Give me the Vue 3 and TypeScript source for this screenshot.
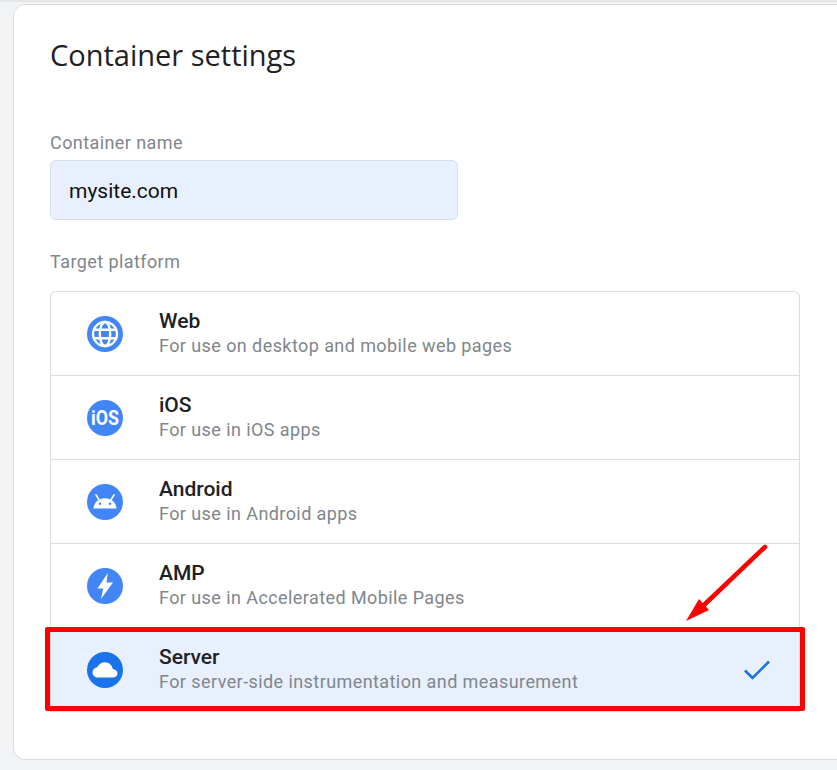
<script setup lang="ts">
interface Platform {
  name: string;
  desc: string;
  icon: string;
  selected?: boolean;
}
const platforms: Platform[] = [
  { name: "Web", desc: "For use on desktop and mobile web pages", icon: "web" },
  { name: "iOS", desc: "For use in iOS apps", icon: "ios" },
  { name: "Android", desc: "For use in Android apps", icon: "android" },
  { name: "AMP", desc: "For use in Accelerated Mobile Pages", icon: "amp" },
  { name: "Server", desc: "For server-side instrumentation and measurement", icon: "server", selected: true },
];
</script>

<template>
  <div class="page">
    <section class="card">
      <h1 class="title">Container settings</h1>
      <label class="label name-label">Container name</label>
      <div class="input">mysite.com</div>
      <label class="label target-label">Target platform</label>
      <div class="list">
        <div v-for="p in platforms" :key="p.name" class="row" :class="{ selected: p.selected }">
          <svg class="icon" viewBox="0 0 36 36" width="36" height="36">
            <circle cx="18" cy="18" r="18" :fill="p.selected ? '#1a73e8' : '#4285f4'" />
            <g v-if="p.icon === 'web'" fill="none" stroke="#fff" stroke-width="2.400">
              <circle cx="18" cy="18" r="12" />
              <ellipse cx="18" cy="18" rx="5.200" ry="12" />
              <path d="M7 13.800h22M7 22.200h22" />
            </g>
            <text v-else-if="p.icon === 'ios'" x="18" y="25" text-anchor="middle" textLength="28" lengthAdjust="spacingAndGlyphs" class="ios-text">iOS</text>
            <g v-else-if="p.icon === 'android'" fill="#fff">
              <path d="M6.500 24.500c.3-5.900 5-10.300 11.500-10.300s11.200 4.400 11.500 10.300z" />
              <path d="M11.800 15.500 9 10.800M24.200 15.500 27 10.800" stroke="#fff" stroke-width="1.600" stroke-linecap="round" />
              <circle cx="13" cy="19.700" r="1.200" fill="#4285f4" />
              <circle cx="23" cy="19.700" r="1.200" fill="#4285f4" />
            </g>
            <path v-else-if="p.icon === 'amp'" fill="#fff" d="M20.800 5 10.500 20.500h5.700L14 31 26 14.500h-6.500z" />
            <path v-else fill="#fff" d="M11 25.500c-3.200 0-5.500-2.300-5.500-5.100 0-2.700 2.100-4.800 4.800-5.100 1.200-3 4.100-5 7.500-5 4.100 0 7.400 2.900 8 6.800 2.600.2 4.700 2.100 4.700 4.300 0 2.300-2.100 4.100-4.700 4.100z" />
          </svg>
          <div class="text">
            <div class="name">{{ p.name }}</div>
            <div class="desc">{{ p.desc }}</div>
          </div>
          <svg v-if="p.selected" class="check" viewBox="0 0 28 22" width="28" height="22">
            <path d="M2 11.500 9.500 19 26 2.500" fill="none" stroke="#1a73e8" stroke-width="2.600" />
          </svg>
        </div>
        <div class="highlight"></div>
      </div>
    </section>
    <svg class="arrow" viewBox="0 0 90 100" width="90" height="100">
      <path d="M80 4 19 62" stroke="#f00" stroke-width="4.600" stroke-linecap="round" fill="none" />
      <path d="M1 78 14 56 24 67z" fill="#f00" />
    </svg>
  </div>
</template>

<style>
html, body { margin: 0; background: #f1f3f4; }
</style>

<style scoped>
.page {
  position: relative;
  width: 837px;
  height: 770px;
  overflow: hidden;
  box-sizing: border-box;
  padding: 2px 0 0 13px;
  background: #f1f3f4;
  border-top: 2px solid #e4e6e8;
  font-family: Roboto, "Liberation Sans", sans-serif;
}
.card {
  box-sizing: border-box;
  width: 900px;
  height: 756px;
  background: #fff;
  border: 1px solid #dadce0;
  border-radius: 12px;
  padding: 31px 36px 0;
}
.title {
  margin: 0;
  font-family: "Open Sans", Roboto, sans-serif;
  font-weight: 400;
  font-size: 29px;
  line-height: 38px;
  color: #202124;
}
.label {
  display: block;
  font-size: 18px;
  line-height: 20px;
  letter-spacing: 0.42px;
  color: #80868b;
}
.name-label { margin-top: 59px; }
.input {
  box-sizing: border-box;
  width: 408px;
  height: 60px;
  margin-top: 7px;
  padding: 2px 0 0 18px;
  display: flex;
  align-items: center;
  background: #e8f0fe;
  border: 1px solid #d6dfee;
  border-radius: 6px;
  font-size: 21px;
  color: #111;
}
.target-label { margin-top: 32px; }
.list {
  position: relative;
  box-sizing: border-box;
  width: 750px;
  margin-top: 19px;
  border: 1px solid #dadce0;
  border-bottom: 0;
  border-radius: 6px 6px 0 0;
}
.row {
  box-sizing: border-box;
  height: 84px;
  display: flex;
  align-items: center;
  padding-left: 36px;
  border-bottom: 1px solid #dadce0;
}
.row:last-of-type { border-bottom: 0; }
.row.selected { background: #e8f0fe; }
.icon { flex: none; }
.text { margin-left: 36px; flex: 1; }
.name {
  font-size: 21px;
  font-weight: 500;
  line-height: 22px;
  color: #202124;
}
.desc {
  margin-top: 2px;
  font-size: 18px;
  line-height: 24px;
  letter-spacing: 0.42px;
  color: #80868b;
}
.check { margin-right: 28px; }
.ios-text {
  font-family: Roboto, sans-serif;
  font-size: 20px;
  font-weight: 700;
  fill: #fff;
}
.highlight {
  position: absolute;
  left: -6px;
  right: -6px;
  bottom: 1px;
  height: 84px;
  border: 5px solid #f00;
  border-radius: 2px;
  box-sizing: border-box;
}
.arrow {
  position: absolute;
  left: 685px;
  top: 541px;
}
</style>
